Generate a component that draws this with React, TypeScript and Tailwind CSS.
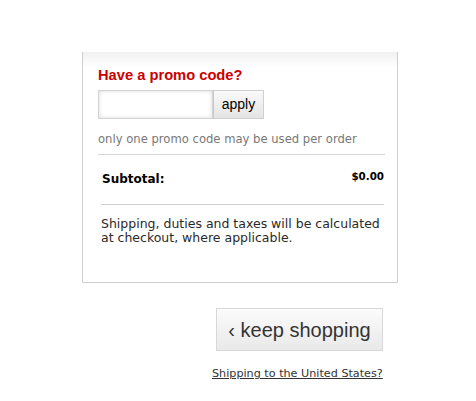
export default function App() {
  return (
    <div className="w-[476px] h-[401px] bg-white relative" style={{ fontFamily: '"DejaVu Sans", Verdana, sans-serif' }}>
      <div className="pt-[52px] pl-[82px]">
        <div className="w-[316px] h-[231px] border-x border-b border-[#cfcfcf] bg-gradient-to-b from-[#f0f0f0] via-white to-white bg-[length:100%_30px] bg-no-repeat pt-[14px] pl-[15px] pr-[12px]">
          <div className="text-[#cc0000] font-bold text-[14.7px] leading-[18px] h-[22px]" style={{ fontFamily: '"Liberation Sans", Arial, sans-serif' }}>Have a promo code?</div>
          <div className="flex mt-[2px] h-[29px]">
            <div className="w-[115px] h-[29px] border border-[#d4d4d4] bg-white shadow-[inset_0_0_4px_rgba(0,0,0,0.15)]"></div>
            <div className="w-[51px] h-[29px] border border-[#d0d0d0] border-l-[#c8c8c8] bg-gradient-to-b from-[#fafafa] to-[#e4e4e4] flex items-center justify-center text-[14px] text-black" style={{ fontFamily: '"Liberation Sans", Arial, sans-serif' }}>apply</div>
          </div>
          <div className="mt-[13px] text-[11.6px] text-[#777] leading-[14px] whitespace-nowrap">only one promo code may be used per order</div>
          <div className="mt-[8px] h-px bg-[#d6d6d6]"></div>
          <div className="flex justify-between items-start mt-[14px] pl-[4px] pr-[1px]">
            <span className="font-bold text-[12px] leading-[16px] mt-[2px] text-black">Subtotal:</span>
            <span className="font-bold text-[10.3px] leading-[14px] text-black">$0.00</span>
          </div>
          <div className="mt-[17px] h-px bg-[#d0d0d0] ml-[3px] mr-[1px]"></div>
          <div className="mt-[12px] pl-[3px] w-[290px] text-[12.5px] leading-[14px] text-[#2a2a2a]">Shipping, duties and taxes will be calculated at checkout, where applicable.</div>
        </div>
      </div>
      <div className="pl-[216px] mt-[25px]">
        <div className="w-[167px] h-[43px] border border-[#d8d8d8] bg-gradient-to-b from-[#fbfbfb] to-[#e9e9e9] flex items-center justify-center text-[20px] text-[#333]" style={{ fontFamily: '"Liberation Sans", Arial, sans-serif' }}>‹ keep shopping</div>
      </div>
      <div className="pl-[212px] mt-[17px] text-[11.2px] leading-[12px] text-[#333] underline whitespace-nowrap">Shipping to the United States?</div>
    </div>
  );
}
